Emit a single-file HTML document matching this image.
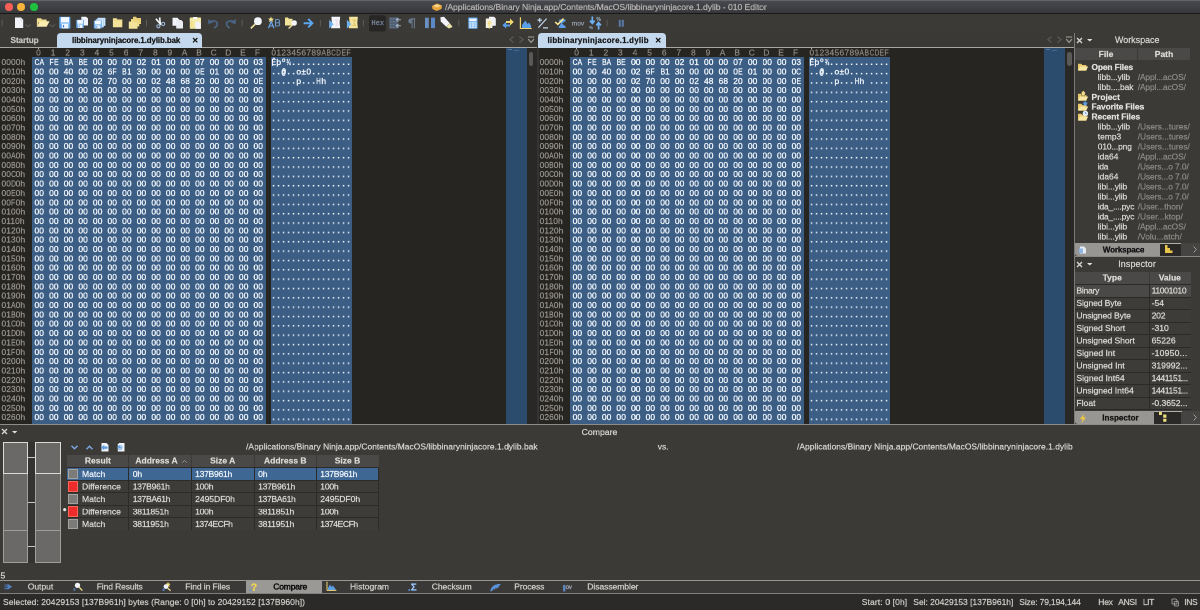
<!DOCTYPE html><html><head><meta charset="utf-8"><title>010 Editor</title><style>
html,body{margin:0;padding:0;}
body{width:1200px;height:610px;overflow:hidden;position:relative;background:#3b3a37;font-family:"Liberation Sans",sans-serif;}
#r{position:absolute;left:0;top:0;width:1200px;height:610px;}
#f0{position:absolute;left:0;top:0;width:2400px;height:1220px;transform:scale(.5);transform-origin:0 0;}
#f{position:absolute;left:0;top:0;width:1200px;height:610px;zoom:2;will-change:transform;}
div{position:absolute;box-sizing:border-box;}
svg{position:absolute;overflow:visible;}
.t{white-space:pre;-webkit-text-stroke:.22px;}
i{font-style:normal;display:inline-block;text-align:center;}

.col{top:58.1px;font-size:8.4px;line-height:9.342px;color:#f2f7fc;white-space:pre;-webkit-text-stroke:.3px;}
.hd{font-size:8.4px;line-height:9.5px;color:#8d8983;white-space:pre;-webkit-text-stroke:.2px;}
.ad{color:#9a9792;-webkit-text-stroke:.2px;letter-spacing:0.08px;}
.l{width:4.672px;}
.l b{display:inline-block;font-weight:normal;transform:scaleX(.8);margin:0 -1px;}
.hx{width:14.6px;text-align:center;letter-spacing:0.1px;}
.as i{width:5px;}
.as b{display:inline-block;font-weight:normal;margin:0 -2px;}
.dt{letter-spacing:2.616px;padding-left:1.308px;}
</style></head><body><div id="r">
<div style="left:0px;top:0px;width:1200px;height:13px;background:linear-gradient(#494a50,#37383c);"></div>
<div style="left:0px;top:0px;width:1200px;height:1px;background:#636469;"></div>
<div style="left:0px;top:13px;width:1200px;height:1px;background:#191919;"></div>
<div style="left:4.699999999999999px;top:3px;width:8px;height:8px;border-radius:4px;background:#f95f57"></div>
<div style="left:17px;top:3px;width:8px;height:8px;border-radius:4px;background:#f8b43a"></div>
<div style="left:30px;top:3px;width:8px;height:8px;border-radius:4px;background:#1fc13f"></div>
<div style="left:0px;top:14px;width:1200px;height:19px;background:#3b3a36;"></div>
<div style="left:0px;top:33px;width:1075px;height:15px;background:#3a3935;"></div>
<div style="left:0px;top:48px;width:536.5px;height:376px;background:#272521;"></div>
<div style="left:32px;top:57px;width:234px;height:367px;background:#3c5e85;"></div>
<div style="left:271px;top:57px;width:80.5px;height:367px;background:#3c5e85;"></div>
<div style="left:506px;top:48px;width:20.8px;height:376px;background:#2b4c6d;"></div>
<div style="left:38px;top:47.8px;width:1.1px;height:1.7px;background:#bdbab6;"></div>
<div style="left:273.2px;top:47.8px;width:1.1px;height:1.7px;background:#bdbab6;"></div>
<div style="left:271.7px;top:58.6px;width:0.9px;height:7px;background:#dfe7f1;"></div>
<div style="left:508px;top:48.6px;width:4px;height:0.9px;background:#4f77a0;"></div>
<div style="left:514px;top:49.6px;width:5px;height:0.9px;background:#41698f;"></div>
<div style="left:527px;top:48px;width:9.5px;height:376px;background:#2a2826;"></div>
<div style="left:528.7px;top:52px;width:4.8px;height:14px;background:#5b5957;border-radius:2.4px"></div>
<svg style="left:271.2px;top:58.1px" width="80" height="364.34" viewBox="0 0 80 364.34"><defs><pattern id="p0" x="0" y="28.026" width="5" height="9.342" patternUnits="userSpaceOnUse"><rect x="1.8" y="5.55" width="1.5" height="1.45" fill="#f4f9ff"/></pattern></defs><g fill="#f4f9ff"><rect x="21.85" y="5.55" width="1.5" height="1.45"/><rect x="26.85" y="5.55" width="1.5" height="1.45"/><rect x="31.85" y="5.55" width="1.5" height="1.45"/><rect x="36.85" y="5.55" width="1.5" height="1.45"/><rect x="41.85" y="5.55" width="1.5" height="1.45"/><rect x="46.85" y="5.55" width="1.5" height="1.45"/><rect x="51.85" y="5.55" width="1.5" height="1.45"/><rect x="56.85" y="5.55" width="1.5" height="1.45"/><rect x="61.85" y="5.55" width="1.5" height="1.45"/><rect x="66.85" y="5.55" width="1.5" height="1.45"/><rect x="71.85" y="5.55" width="1.5" height="1.45"/><rect x="76.85" y="5.55" width="1.5" height="1.45"/><rect x="1.85" y="14.89" width="1.5" height="1.45"/><rect x="6.85" y="14.89" width="1.5" height="1.45"/><rect x="16.85" y="14.89" width="1.5" height="1.45"/><rect x="21.85" y="14.89" width="1.5" height="1.45"/><rect x="41.85" y="14.89" width="1.5" height="1.45"/><rect x="46.85" y="14.89" width="1.5" height="1.45"/><rect x="51.85" y="14.89" width="1.5" height="1.45"/><rect x="56.85" y="14.89" width="1.5" height="1.45"/><rect x="61.85" y="14.89" width="1.5" height="1.45"/><rect x="66.85" y="14.89" width="1.5" height="1.45"/><rect x="71.85" y="14.89" width="1.5" height="1.45"/><rect x="76.85" y="14.89" width="1.5" height="1.45"/><rect x="1.85" y="24.23" width="1.5" height="1.45"/><rect x="6.85" y="24.23" width="1.5" height="1.45"/><rect x="11.85" y="24.23" width="1.5" height="1.45"/><rect x="16.85" y="24.23" width="1.5" height="1.45"/><rect x="21.85" y="24.23" width="1.5" height="1.45"/><rect x="31.85" y="24.23" width="1.5" height="1.45"/><rect x="36.85" y="24.23" width="1.5" height="1.45"/><rect x="41.85" y="24.23" width="1.5" height="1.45"/><rect x="61.85" y="24.23" width="1.5" height="1.45"/><rect x="66.85" y="24.23" width="1.5" height="1.45"/><rect x="71.85" y="24.23" width="1.5" height="1.45"/><rect x="76.85" y="24.23" width="1.5" height="1.45"/><rect x="0" y="28.026" width="80" height="336.312" fill="url(#p0)"/></g></svg>
<div style="left:538.1px;top:48px;width:536.5px;height:376px;background:#272521;"></div>
<div style="left:570.1px;top:57px;width:234px;height:367px;background:#3c5e85;"></div>
<div style="left:809.1px;top:57px;width:80.5px;height:367px;background:#3c5e85;"></div>
<div style="left:1044.1px;top:48px;width:20.8px;height:376px;background:#2b4c6d;"></div>
<div style="left:576.1px;top:47.8px;width:1.1px;height:1.7px;background:#bdbab6;"></div>
<div style="left:811.3px;top:47.8px;width:1.1px;height:1.7px;background:#bdbab6;"></div>
<div style="left:809.8px;top:58.6px;width:0.9px;height:7px;background:#dfe7f1;"></div>
<div style="left:1046.1px;top:48.6px;width:4px;height:0.9px;background:#4f77a0;"></div>
<div style="left:1052.1px;top:49.6px;width:5px;height:0.9px;background:#41698f;"></div>
<div style="left:1065.1px;top:48px;width:9.5px;height:376px;background:#2a2826;"></div>
<div style="left:1066.8000000000002px;top:52px;width:4.8px;height:14px;background:#5b5957;border-radius:2.4px"></div>
<svg style="left:809.3px;top:58.1px" width="80" height="364.34" viewBox="0 0 80 364.34"><defs><pattern id="p538" x="0" y="28.026" width="5" height="9.342" patternUnits="userSpaceOnUse"><rect x="1.8" y="5.55" width="1.5" height="1.45" fill="#f4f9ff"/></pattern></defs><g fill="#f4f9ff"><rect x="21.85" y="5.55" width="1.5" height="1.45"/><rect x="26.85" y="5.55" width="1.5" height="1.45"/><rect x="31.85" y="5.55" width="1.5" height="1.45"/><rect x="36.85" y="5.55" width="1.5" height="1.45"/><rect x="41.85" y="5.55" width="1.5" height="1.45"/><rect x="46.85" y="5.55" width="1.5" height="1.45"/><rect x="51.85" y="5.55" width="1.5" height="1.45"/><rect x="56.85" y="5.55" width="1.5" height="1.45"/><rect x="61.85" y="5.55" width="1.5" height="1.45"/><rect x="66.85" y="5.55" width="1.5" height="1.45"/><rect x="71.85" y="5.55" width="1.5" height="1.45"/><rect x="76.85" y="5.55" width="1.5" height="1.45"/><rect x="1.85" y="14.89" width="1.5" height="1.45"/><rect x="6.85" y="14.89" width="1.5" height="1.45"/><rect x="16.85" y="14.89" width="1.5" height="1.45"/><rect x="21.85" y="14.89" width="1.5" height="1.45"/><rect x="41.85" y="14.89" width="1.5" height="1.45"/><rect x="46.85" y="14.89" width="1.5" height="1.45"/><rect x="51.85" y="14.89" width="1.5" height="1.45"/><rect x="56.85" y="14.89" width="1.5" height="1.45"/><rect x="61.85" y="14.89" width="1.5" height="1.45"/><rect x="66.85" y="14.89" width="1.5" height="1.45"/><rect x="71.85" y="14.89" width="1.5" height="1.45"/><rect x="76.85" y="14.89" width="1.5" height="1.45"/><rect x="1.85" y="24.23" width="1.5" height="1.45"/><rect x="6.85" y="24.23" width="1.5" height="1.45"/><rect x="11.85" y="24.23" width="1.5" height="1.45"/><rect x="16.85" y="24.23" width="1.5" height="1.45"/><rect x="21.85" y="24.23" width="1.5" height="1.45"/><rect x="31.85" y="24.23" width="1.5" height="1.45"/><rect x="36.85" y="24.23" width="1.5" height="1.45"/><rect x="41.85" y="24.23" width="1.5" height="1.45"/><rect x="61.85" y="24.23" width="1.5" height="1.45"/><rect x="66.85" y="24.23" width="1.5" height="1.45"/><rect x="71.85" y="24.23" width="1.5" height="1.45"/><rect x="76.85" y="24.23" width="1.5" height="1.45"/><rect x="0" y="28.026" width="80" height="336.312" fill="url(#p538)"/></g></svg>
<div style="left:536.5px;top:48px;width:2px;height:376px;background:#353432;"></div>
<div style="left:0px;top:47px;width:57px;height:1px;background:#a9a6a2;"></div>
<div style="left:202px;top:47px;width:334.5px;height:1px;background:#a9a6a2;"></div>
<div style="left:666px;top:47px;width:408px;height:1px;background:#a9a6a2;"></div>
<div style="left:57px;top:33px;width:145px;height:15px;background:#c4d9ee;border-radius:4px 4px 0 0"></div>
<div style="left:538px;top:33px;width:128px;height:15px;background:#c4d9ee;border-radius:4px 4px 0 0"></div>
<svg style="left:0;top:0" width="650" height="34" viewBox="0 0 650 34"><rect x="1.6" y="19.7" width="1" height="6.6" fill="#5f5d5a"/><rect x="146.0" y="19.7" width="1" height="6.6" fill="#5f5d5a"/><rect x="241.6" y="19.7" width="1" height="6.6" fill="#5f5d5a"/><rect x="319.9" y="19.7" width="1" height="6.6" fill="#5f5d5a"/><rect x="362.8" y="19.7" width="1" height="6.6" fill="#5f5d5a"/><rect x="458.3" y="19.7" width="1" height="6.6" fill="#5f5d5a"/><rect x="606.6" y="19.7" width="1" height="6.6" fill="#5f5d5a"/><path d="M15 17.6H21.0L23.2 19.8V28.0H15Z" fill="#f1f3f8"/><path d="M20.8 17.6V19.9H23.2" fill="none" stroke="#c9ccd4" stroke-width="0.6"/><path d="M25.4 24.6L28.099999999999998 26.6L30.799999999999997 24.6" fill="none" stroke="#73716d" stroke-width="0.9"/><path d="M37 18.3H41L42 19.5H46.6V22H37Z" fill="#f0dc8c"/><path d="M37 26.8V21.5H39L37 26.8Z" fill="#f0dc8c"/><path d="M37 26.8L39.6 21.2H49.6L46.6 26.8Z" fill="#f8ecb0"/><path d="M37.3 19V26.8" fill="none" stroke="#f0dc8c" stroke-width="0.7"/><path d="M49.8 24.6L52.5 26.6L55.199999999999996 24.6" fill="none" stroke="#73716d" stroke-width="0.9"/><rect x="59.3" y="16.8" width="11.1" height="11.6" fill="#5fa6ee" rx="0.6"/><rect x="60.854" y="17.148" width="8.214" height="5.336" fill="#f6f9fd"/><rect x="60.41" y="22.484" width="8.88" height="1.392" fill="#a4cdf6"/><rect x="61.742" y="23.876" width="6.659999999999999" height="4.524" fill="#eef4fb"/><rect x="62.852" y="24.92" width="1.2209999999999999" height="2.552" fill="#3f7fd0"/><path d="M81.3 16.8H86.2L88.0 18.6V25.6H81.3Z" fill="#f1f3f8"/><rect x="76.3" y="19.8" width="7.5" height="8.2" fill="#5fa6ee" rx="0.6"/><rect x="77.35" y="20.046" width="5.55" height="3.772" fill="#f6f9fd"/><rect x="77.05" y="23.818" width="6.0" height="0.9839999999999999" fill="#a4cdf6"/><rect x="77.95" y="24.802" width="4.5" height="3.198" fill="#eef4fb"/><rect x="78.7" y="25.54" width="0.825" height="1.8039999999999998" fill="#3f7fd0"/><rect x="97.4" y="17.7" width="8.1" height="8.2" fill="#9fc6f2" rx="0.5"/><rect x="97.9" y="18.2" width="7" height="7" fill="#d9e8fa"/><rect x="95.7" y="19.2" width="8.1" height="8.2" fill="#9fc6f2" rx="0.5"/><rect x="96.2" y="19.7" width="7" height="7" fill="#e3eefb"/><rect x="93.8" y="20.6" width="8" height="7.8" fill="#5fa6ee" rx="0.6"/><rect x="94.92" y="20.834000000000003" width="5.92" height="3.588" fill="#f6f9fd"/><rect x="94.6" y="24.422" width="6.4" height="0.9359999999999999" fill="#a4cdf6"/><rect x="95.56" y="25.358" width="4.8" height="3.042" fill="#eef4fb"/><rect x="96.36" y="26.060000000000002" width="0.88" height="1.716" fill="#3f7fd0"/><path d="M112.9 18.2H116.6L117.5 19.4H122.3V27.3H112.9Z" fill="#f3e29a"/><path d="M112.9 20.3H122.3" fill="none" stroke="#e8cf74" stroke-width="0.5"/><path d="M133 16.8H136L137 18H141V24H133Z" fill="#e8cf74"/><path d="M131 19H134L135 20.2H139.3V26.4H131Z" fill="#efd985"/><path d="M128.8 21.4H132.2L133.2 22.6H137.5V28.8H128.8Z" fill="#f3e29a"/><path d="M155.9 18.7L161 24.6" fill="none" stroke="#f2f5fa" stroke-width="1.7"/><path d="M159.7 17.5L160.3 24.8" fill="none" stroke="#f2f5fa" stroke-width="1.6"/><circle cx="158.4" cy="26.3" r="1.6" fill="none" stroke="#a5bde0" stroke-width="1.1"/><circle cx="163.1" cy="23.9" r="1.6" fill="none" stroke="#a5bde0" stroke-width="1.1"/><path d="M172.5 17.8H177.5L179.1 19.400000000000002V25.8H172.5Z" fill="#f1f3f8"/><path d="M176.2 20H181.2L183.0 21.8V28.4H176.2Z" fill="#e9ecf3"/><rect x="189.8" y="17.6" width="11.2" height="11.1" fill="#f4e8a2" rx="0.6"/><rect x="193" y="17" width="4.4" height="1.9" fill="#f6f7fa" rx="0.5"/><path d="M191 18H192.6V28.7H191Z" fill="#efdf85"/><rect x="189.8" y="19.6" width="11.2" height="0.9" fill="#faf3c8"/><path d="M195.3 21.8H199.3L200.8 23.3V28.700000000000003H195.3Z" fill="#f1f3f8"/><path d="M209.3 22.2C213 19.6 217.6 21 217.3 24.4C217.1 26.2 215.6 27.3 214.2 28" fill="none" stroke="#4b6685" stroke-width="1.7"/><path d="M207.9 19L208.4 24.3L213.3 22.6Z" fill="#4b6685"/><path d="M234.6 22.2C230.9 19.6 226.3 21 226.6 24.4C226.8 26.2 228.3 27.3 229.7 28" fill="none" stroke="#4b6685" stroke-width="1.7"/><path d="M236 19L235.5 24.3L230.6 22.6Z" fill="#4b6685"/><path d="M255.2 24.2L250.8 28.4" fill="none" stroke="#f1e2a0" stroke-width="1.6"/><circle cx="257.9" cy="21.2" r="3.9" fill="#f3f6fa"/><path d="M271 16.6L271.9 18.5L274 18.8L272.4 20.2L272.9 22.2L271 21.2L269.1 22.2L269.6 20.2L268 18.8L270.1 18.5Z" fill="#f2e08c"/><path d="M268.4 28.2L271.2 21.6L274 28.2M269.4 26H273" fill="none" stroke="#6aa6ea" stroke-width="1.2"/><path d="M275.5 19.5V26H278C280.3 26 280.3 22.8 278 22.8H275.5M278 22.8C280 22.8 280 19.5 277.8 19.5H275.5" fill="none" stroke="#6d97c8" stroke-width="1.1"/><path d="M285 17.6H288L288.9 18.8H292.5V25.5H285Z" fill="#f3e29a"/><path d="M292.6 24.8L288.6 28.6" fill="none" stroke="#f1e2a0" stroke-width="1.4"/><circle cx="294.2" cy="23" r="2.7" fill="#f3f6fa"/><path d="M303.6 23.2H311.5M308.2 19L312.4 23.2L308.2 27.4" fill="none" stroke="#5ba6ee" stroke-width="1.9"/><path d="M331.4 16.8H340.2L339.59999999999997 22.4L340.2 28.2H331.0L331.8 22.4Z" fill="#f3f5fa"/><path d="M334.8 20H337.8L336.2 22.6L337.8 25.4H334.8" fill="none" stroke="#f0c8d8" stroke-width="0.7"/><path d="M329.2 19.8L333.59999999999997 24.3L329.2 28.6Z" fill="#6fb0f0"/><path d="M349.09999999999997 16.8H357.9L357.29999999999995 22.4L357.9 28.2H348.7L349.5 22.4Z" fill="#f5e59c"/><path d="M352.5 20H355.5L353.9 22.6L355.5 25.4H352.5" fill="none" stroke="#d4b04a" stroke-width="0.7"/><path d="M346.9 19.8L351.29999999999995 24.3L346.9 28.6Z" fill="#6fb0f0"/><rect x="369" y="15.3" width="16.7" height="16.2" fill="#272624" rx="2"/><rect x="389.2" y="17.2" width="8.6" height="11.4" fill="#4f5d6e" rx="0.4"/><rect x="389.8" y="18" width="1.8" height="1.6" fill="#64748a"/><rect x="392.6" y="18" width="1.8" height="1.6" fill="#64748a"/><rect x="395.4" y="18" width="1.8" height="1.6" fill="#64748a"/><rect x="389.8" y="20.9" width="1.8" height="1.6" fill="#64748a"/><rect x="392.6" y="20.9" width="1.8" height="1.6" fill="#64748a"/><rect x="395.4" y="20.9" width="1.8" height="1.6" fill="#64748a"/><rect x="389.8" y="23.8" width="1.8" height="1.6" fill="#64748a"/><rect x="392.6" y="23.8" width="1.8" height="1.6" fill="#64748a"/><rect x="395.4" y="23.8" width="1.8" height="1.6" fill="#64748a"/><rect x="389.8" y="26.7" width="1.8" height="1.6" fill="#64748a"/><rect x="392.6" y="26.7" width="1.8" height="1.6" fill="#64748a"/><rect x="395.4" y="26.7" width="1.8" height="1.6" fill="#64748a"/><path d="M400.8 19.8H396.6M398.4 18L396.4 19.8L398.4 21.6M400.8 25.8H396.6M398.4 24L396.4 25.8L398.4 27.6" fill="none" stroke="#a3b3c8" stroke-width="1.1"/><path d="M412.1 18.6V28.4M414.4 18.6V28.4M415.4 18.9H410.8" fill="none" stroke="#6c7c90" stroke-width="1"/><path d="M411.6 18.4C407.2 18.4 407.2 23.6 411.6 23.6Z" fill="#6c7c90"/><rect x="425" y="17.7" width="3.8" height="10.4" fill="#6a90c2"/><rect x="431" y="17.7" width="4" height="10.4" fill="#5c89c6"/><path d="M440.4 17.2L444 16.8L450 23.6L446 26.6L440.8 21.4Z" fill="#f3f4f9"/><path d="M446 26.6L450 23.6L452.6 27L448.8 28.4Z" fill="#efe6ac"/><rect x="468.3" y="17.6" width="9.2" height="11.2" fill="#6aacf0" rx="0.7"/><rect x="469.3" y="18.6" width="7.2" height="2.6" fill="#f0f6fc"/><rect x="469.3" y="22.2" width="7.2" height="1.5" fill="#dcebf9"/><rect x="469.3" y="24.3" width="7.2" height="1.5" fill="#dcebf9"/><rect x="469.3" y="26.4" width="7.2" height="1.5" fill="#dcebf9"/><rect x="471.5" y="22.2" width="0.5" height="5.7" fill="#6aacf0"/><rect x="474" y="22.2" width="0.5" height="5.7" fill="#6aacf0"/><path d="M489 16.8H494.0L495.8 18.6V25.8H489Z" fill="#f1f3f8"/><path d="M485.8 18.6H490.8L492.40000000000003 20.200000000000003V28.0H485.8Z" fill="#f4f1e4"/><circle cx="489.4" cy="23" r="2" fill="#f2e08c"/><path d="M489.4 25V28.6" fill="none" stroke="#f2e08c" stroke-width="1.3"/><path d="M506 21H510V18.4L513.8 22L510 25.6V23H506Z" fill="#f0d670"/><path d="M510 24.4H506.2V21.8L502.3 25.2L506.2 28.6V26.4H510Z" fill="#5b9ee8"/><path d="M522 28V25L525.4 20.4L527.6 24L529 22.4L531 25.6V28Z" fill="#5b9ee8"/><path d="M520.4 17.2V28.5H531.8" fill="none" stroke="#f0d670" stroke-width="1.2"/><path d="M537.4 20.2H542M539.7 17.9V22.5M543 27.8H548M538.4 27.6L546.6 18.6" fill="none" stroke="#c3d6ef" stroke-width="1.2"/><path d="M559.2 19.6H565.6V21L562 23.6L565.6 26.4V28H558.8V26.6L561 23.8L559.2 21Z" fill="#5b9ee8"/><path d="M555.2 22L557.8 24.4L563.6 18.6" fill="none" stroke="#f3e79a" stroke-width="1.6"/><path d="M592.3 16.6V23M590 20.6L592.3 23.4L594.6 20.6" fill="none" stroke="#6eb0f2" stroke-width="1.7"/><path d="M598.6 29.4V23M596.3 25.4L598.6 22.6L600.9 25.4" fill="none" stroke="#6eb0f2" stroke-width="1.7"/><rect x="618.8" y="19.8" width="2" height="7" fill="#587aa6"/><rect x="621.8" y="19.8" width="2" height="7" fill="#587aa6"/></svg>
<svg style="left:192.8px;top:38.4px" width="4.4" height="4.4" viewBox="0 0 4.4 4.4"><path d="M0 0L4.4 4.4M4.4 0L0 4.4" stroke="#111" stroke-width="1.2" fill="none"/></svg>
<svg style="left:656.3px;top:38.4px" width="4.4" height="4.4" viewBox="0 0 4.4 4.4"><path d="M0 0L4.4 4.4M4.4 0L0 4.4" stroke="#111" stroke-width="1.2" fill="none"/></svg>
<svg style="left:508.5px;top:36px" width="26" height="9" viewBox="0 0 26 9"><path d="M4.6 .6L.9 3.6L4.6 6.6M10.4 .6L14.1 3.6L10.4 6.6" stroke="#5f5d5a" stroke-width="1.2" fill="none"/><path d="M19 1H25.2M19.2 3.2L22.1 6.4L25 3.2" stroke="#a5a29e" stroke-width="1.1" fill="none"/></svg>
<svg style="left:1047.2px;top:36px" width="26" height="9" viewBox="0 0 26 9"><path d="M4.6 .6L.9 3.6L4.6 6.6M10.4 .6L14.1 3.6L10.4 6.6" stroke="#5f5d5a" stroke-width="1.2" fill="none"/><path d="M19 1H25.2M19.2 3.2L22.1 6.4L25 3.2" stroke="#a5a29e" stroke-width="1.1" fill="none"/></svg>
<svg style="left:432px;top:2.5px" width="10" height="8" viewBox="0 0 10 8"><path d="M0 3L5 .5L10 2.5L9.5 6L4.5 8L.5 6Z" fill="#e9a43c"/><path d="M1 2.8L5 1.2L9 2.7L5 4.5Z" fill="#f6d88c"/></svg>
<div style="left:1075px;top:33px;width:125px;height:391px;background:#3b3a37;"></div>
<div style="left:1074px;top:33px;width:1px;height:391px;background:#7c7a77;"></div>
<svg style="left:1076.9px;top:37.7px" width="5.0" height="5.0" viewBox="0 0 5.0 5.0"><path d="M0 0L5.0 5.0M5.0 0L0 5.0" stroke="#dad8d4" stroke-width="1.3" fill="none"/></svg>
<svg style="left:1087.3px;top:39.2px" width="5.4" height="3" viewBox="0 0 5.4 3"><path d="M0 0H5.4L2.7 2.6Z" fill="#e4e2de"/></svg>
<div style="left:1075px;top:48.3px;width:115px;height:12px;background:#4a4947;"></div>
<div style="left:1137px;top:48.3px;width:1px;height:12px;background:#3b3a38;"></div>
<svg style="left:1077.8px;top:67.1px" width="11" height="1" viewBox="0 0 11 1"><path d="M0 -3.2H3.4L4.3 -2.1H8.4V3.6H0Z" fill="#e6c76a"/><path d="M0 3.6L2 -.6H10.2L8.2 3.6Z" fill="#f7e7a2"/></svg>
<svg style="left:1077.8px;top:97.05499999999999px" width="11" height="1" viewBox="0 0 11 1"><path d="M0 -3.2H3.4L4.3 -2.1H8.4V3.6H0Z" fill="#e6c76a"/><path d="M0 3.6L2 -.6H10.2L8.2 3.6Z" fill="#f7e7a2"/><path d="M3.6 -1.2V-3.6H2.6L5.3 -6.6L8 -3.6H7V-1.2Z" fill="#f5de86" stroke="#3b3a37" stroke-width=".4"/></svg>
<svg style="left:1077.8px;top:107.03999999999999px" width="11" height="1" viewBox="0 0 11 1"><path d="M0 -3.2H3.4L4.3 -2.1H8.4V3.6H0Z" fill="#e6c76a"/><path d="M0 3.6L2 -.6H10.2L8.2 3.6Z" fill="#f7e7a2"/><path d="M7.2 -6.4L8.1 -4.6L10 -4.3L8.6 -3L9 -1.1L7.2 -2.1L5.4 -1.1L5.8 -3L4.4 -4.3L6.3 -4.6Z" fill="#5a9fe8"/></svg>
<svg style="left:1077.8px;top:117.02499999999999px" width="11" height="1" viewBox="0 0 11 1"><path d="M0 -3.2H3.4L4.3 -2.1H8.4V3.6H0Z" fill="#e6c76a"/><path d="M0 3.6L2 -.6H10.2L8.2 3.6Z" fill="#f7e7a2"/><circle cx="7.4" cy="-3.6" r="2.7" fill="#e4ecf8"/><path d="M7.4 -5V-3.5H8.6" stroke="#5a8fd0" stroke-width=".7" fill="none"/></svg>
<div style="left:1075px;top:243.2px;width:125px;height:12.6px;background:#464442;"></div>
<div style="left:1075px;top:243.2px;width:84.5px;height:12.6px;background:#989693;border-radius:0 0 0 3px"></div>
<svg style="left:1079px;top:245px" width="8" height="9" viewBox="0 0 8 9"><path d="M1 1.5H5L7 3.5V8.5H1Z" fill="#e6edf6"/><path d="M0 3.5H4V8H0Z" fill="#8fb6e6"/></svg>
<div style="left:1159.5px;top:243.2px;width:21px;height:12.6px;background:#2a2928;"></div>
<div style="left:1159.5px;top:243px;width:21.5px;height:0.9px;background:#b0aeaa;"></div>
<svg style="left:1164.2px;top:245px" width="9" height="8" viewBox="0 0 9 8"><path d="M1 0H3.5V3H6V5.5H8.5V8H1Z" fill="#e8c54a"/></svg>
<svg style="left:1192.5px;top:246px" width="4" height="7" viewBox="0 0 4 7"><path d="M.5 .5L3.5 3.5L.5 6.5" stroke="#a09d99" stroke-width="1" fill="none"/></svg>
<div style="left:1075px;top:256px;width:125px;height:1px;background:#8a8885;"></div>
<svg style="left:1076.9px;top:261.7px" width="5.0" height="5.0" viewBox="0 0 5.0 5.0"><path d="M0 0L5.0 5.0M5.0 0L0 5.0" stroke="#dad8d4" stroke-width="1.3" fill="none"/></svg>
<svg style="left:1087.3px;top:263.2px" width="5.4" height="3" viewBox="0 0 5.4 3"><path d="M0 0H5.4L2.7 2.6Z" fill="#e4e2de"/></svg>
<div style="left:1075px;top:272px;width:115.5px;height:12.2px;background:#4a4947;"></div>
<div style="left:1149.2px;top:272px;width:1px;height:12.2px;background:#3b3a38;"></div>
<div style="left:1075px;top:284.2px;width:115.5px;height:125.4px;background:#3d3c39;"></div>
<div style="left:1149.1px;top:284.2px;width:1.2px;height:125.4px;background:#2b2a28;"></div>
<div style="left:1075px;top:284.2px;width:115.5px;height:12.5px;background:#4a4947;"></div>
<div style="left:1149.1px;top:284.2px;width:1.2px;height:12.5px;background:#2b2a28;"></div>
<div style="left:1075px;top:284.0px;width:115.5px;height:1.15px;background:#2b2a28;"></div>
<div style="left:1075px;top:296.53px;width:115.5px;height:1.15px;background:#2b2a28;"></div>
<div style="left:1075px;top:309.06px;width:115.5px;height:1.15px;background:#2b2a28;"></div>
<div style="left:1075px;top:321.59px;width:115.5px;height:1.15px;background:#2b2a28;"></div>
<div style="left:1075px;top:334.12px;width:115.5px;height:1.15px;background:#2b2a28;"></div>
<div style="left:1075px;top:346.65px;width:115.5px;height:1.15px;background:#2b2a28;"></div>
<div style="left:1075px;top:359.18px;width:115.5px;height:1.15px;background:#2b2a28;"></div>
<div style="left:1075px;top:371.71px;width:115.5px;height:1.15px;background:#2b2a28;"></div>
<div style="left:1075px;top:384.24px;width:115.5px;height:1.15px;background:#2b2a28;"></div>
<div style="left:1075px;top:396.77px;width:115.5px;height:1.15px;background:#2b2a28;"></div>
<div style="left:1075px;top:409.3px;width:115.5px;height:1.1px;background:#2b2a28;"></div>
<div style="left:1075px;top:411.2px;width:125px;height:12.8px;background:#464442;"></div>
<div style="left:1075px;top:411.2px;width:79px;height:12.8px;background:#989693;border-radius:0 0 0 3px"></div>
<svg style="left:1080px;top:413.5px" width="6" height="9" viewBox="0 0 6 9"><path d="M4 0L0 5H2.5L1.5 9L6 3.5H3.3Z" fill="#f0c83c"/></svg>
<div style="left:1154px;top:411.2px;width:27px;height:12.8px;background:#2a2928;"></div>
<div style="left:1154px;top:411px;width:27.5px;height:0.9px;background:#b0aeaa;"></div>
<svg style="left:1158.8px;top:412.2px" width="8" height="10" viewBox="0 0 8 10"><path d="M0 0H2.9V2.9H0ZM4.2 2.5H7.4V5.7H4.2ZM4.2 6.7H7.4V9.8H4.2Z" fill="#eedd7e"/></svg>
<svg style="left:1192.5px;top:414px" width="4" height="7" viewBox="0 0 4 7"><path d="M.5 .5L3.5 3.5L.5 6.5" stroke="#a09d99" stroke-width="1" fill="none"/></svg>
<div style="left:0px;top:424px;width:1200px;height:1px;background:#8f8c88;"></div>
<div style="left:0px;top:425px;width:1200px;height:156px;background:#3b3a37;"></div>
<svg style="left:1.9000000000000004px;top:429.1px" width="5.0" height="5.0" viewBox="0 0 5.0 5.0"><path d="M0 0L5.0 5.0M5.0 0L0 5.0" stroke="#dad8d4" stroke-width="1.3" fill="none"/></svg>
<svg style="left:12px;top:430.6px" width="5.4" height="3" viewBox="0 0 5.4 3"><path d="M0 0H5.4L2.7 2.6Z" fill="#e4e2de"/></svg>
<div style="left:2.6px;top:442.2px;width:25.5px;height:120.4px;background:#6a6967;border:1px solid #a19f9b"></div>
<div style="left:2.6px;top:472.8px;width:25.5px;height:1px;background:#a19f9b;"></div>
<div style="left:2.6px;top:530.3px;width:25.5px;height:1px;background:#a19f9b;"></div>
<div style="left:2.6px;top:442.2px;width:25.5px;height:31.6px;background:none;border:1px solid #dcdad6"></div>
<div style="left:35.1px;top:442.2px;width:26.3px;height:120.4px;background:#6a6967;border:1px solid #a19f9b"></div>
<div style="left:35.1px;top:472.8px;width:26.3px;height:1px;background:#a19f9b;"></div>
<div style="left:35.1px;top:530.3px;width:26.3px;height:1px;background:#a19f9b;"></div>
<div style="left:35.1px;top:442.2px;width:26.3px;height:31.6px;background:none;border:1px solid #dcdad6"></div>
<div style="left:28.1px;top:442.2px;width:7px;height:120.4px;background:#343331;"></div>
<div style="left:28.1px;top:457.4px;width:7px;height:1px;background:#c8c6c2;"></div>
<div style="left:28.1px;top:501.8px;width:7px;height:1px;background:#c8c6c2;"></div>
<div style="left:28.1px;top:545.7px;width:7px;height:1px;background:#c8c6c2;"></div>
<svg style="left:71px;top:444.5px" width="7" height="5" viewBox="0 0 7 5"><path d="M.5 .8L3.5 3.8L6.5 .8" stroke="#7aa6dc" stroke-width="1.5" fill="none"/></svg>
<svg style="left:85.5px;top:444.5px" width="7" height="5" viewBox="0 0 7 5"><path d="M.5 4.2L3.5 1.2L6.5 4.2" stroke="#7aa6dc" stroke-width="1.5" fill="none"/></svg>
<svg style="left:100.5px;top:442.5px" width="8" height="9" viewBox="0 0 8 9"><path d="M.5 0H5.5L7.5 2V8.5H.5Z" fill="#eef3fa"/><path d="M0 4.6L3.2 2V3.6H6.6V5.8H3.2V7.2Z" fill="#5b9be0"/></svg>
<svg style="left:116.5px;top:442.5px" width="8" height="9" viewBox="0 0 8 9"><path d="M2 0H7.5V8.5H.8V1.5Z" fill="#eef3fa"/><circle cx="3" cy="4.6" r="2.4" fill="#5b9be0"/><path d="M1.6 4.6A1.4 1.4 0 1 0 3 3.2" stroke="#eef3fa" stroke-width=".7" fill="none"/></svg>
<div style="left:67px;top:455.4px;width:311.6px;height:12px;background:#4a4947;"></div>
<div style="left:128.3px;top:455.4px;width:1px;height:12px;background:#3b3a38;"></div>
<div style="left:190.7px;top:455.4px;width:1px;height:12px;background:#3b3a38;"></div>
<div style="left:253.7px;top:455.4px;width:1px;height:12px;background:#3b3a38;"></div>
<div style="left:315.9px;top:455.4px;width:1px;height:12px;background:#3b3a38;"></div>
<svg style="left:182px;top:460px" width="5" height="3" viewBox="0 0 5 3"><path d="M.3 2.7L2.5 .5L4.7 2.7" stroke="#a9a6a2" stroke-width=".8" fill="none"/></svg>
<div style="left:67px;top:467.4px;width:311.6px;height:62.8px;background:#2c2b29;"></div>
<div style="left:67px;top:468.0px;width:61.30000000000001px;height:11.7px;background:#3e6794;"></div>
<div style="left:129.3px;top:468.0px;width:61.39999999999998px;height:11.7px;background:#3e6794;"></div>
<div style="left:191.7px;top:468.0px;width:62.0px;height:11.7px;background:#3e6794;"></div>
<div style="left:254.7px;top:468.0px;width:61.19999999999999px;height:11.7px;background:#3e6794;"></div>
<div style="left:316.9px;top:468.0px;width:61.200000000000045px;height:11.7px;background:#3e6794;"></div>
<div style="left:68.2px;top:468.70000000000005px;width:10px;height:10.5px;background:#7b7b7a;border:1px solid #a3a2a0"></div>
<div style="left:67px;top:480.5px;width:61.30000000000001px;height:11.7px;background:#3d3c39;"></div>
<div style="left:129.3px;top:480.5px;width:61.39999999999998px;height:11.7px;background:#3d3c39;"></div>
<div style="left:191.7px;top:480.5px;width:62.0px;height:11.7px;background:#3d3c39;"></div>
<div style="left:254.7px;top:480.5px;width:61.19999999999999px;height:11.7px;background:#3d3c39;"></div>
<div style="left:316.9px;top:480.5px;width:61.200000000000045px;height:11.7px;background:#3d3c39;"></div>
<div style="left:68.2px;top:481.20000000000005px;width:10px;height:10.5px;background:#ef2c2c;border:1px solid #f36a5a"></div>
<div style="left:67px;top:493.0px;width:61.30000000000001px;height:11.7px;background:#3d3c39;"></div>
<div style="left:129.3px;top:493.0px;width:61.39999999999998px;height:11.7px;background:#3d3c39;"></div>
<div style="left:191.7px;top:493.0px;width:62.0px;height:11.7px;background:#3d3c39;"></div>
<div style="left:254.7px;top:493.0px;width:61.19999999999999px;height:11.7px;background:#3d3c39;"></div>
<div style="left:316.9px;top:493.0px;width:61.200000000000045px;height:11.7px;background:#3d3c39;"></div>
<div style="left:68.2px;top:493.70000000000005px;width:10px;height:10.5px;background:#7b7b7a;border:1px solid #a3a2a0"></div>
<div style="left:67px;top:505.5px;width:61.30000000000001px;height:11.7px;background:#3d3c39;"></div>
<div style="left:129.3px;top:505.5px;width:61.39999999999998px;height:11.7px;background:#3d3c39;"></div>
<div style="left:191.7px;top:505.5px;width:62.0px;height:11.7px;background:#3d3c39;"></div>
<div style="left:254.7px;top:505.5px;width:61.19999999999999px;height:11.7px;background:#3d3c39;"></div>
<div style="left:316.9px;top:505.5px;width:61.200000000000045px;height:11.7px;background:#3d3c39;"></div>
<div style="left:68.2px;top:506.20000000000005px;width:10px;height:10.5px;background:#ef2c2c;border:1px solid #f36a5a"></div>
<div style="left:67px;top:518.0px;width:61.30000000000001px;height:11.7px;background:#3d3c39;"></div>
<div style="left:129.3px;top:518.0px;width:61.39999999999998px;height:11.7px;background:#3d3c39;"></div>
<div style="left:191.7px;top:518.0px;width:62.0px;height:11.7px;background:#3d3c39;"></div>
<div style="left:254.7px;top:518.0px;width:61.19999999999999px;height:11.7px;background:#3d3c39;"></div>
<div style="left:316.9px;top:518.0px;width:61.200000000000045px;height:11.7px;background:#3d3c39;"></div>
<div style="left:68.2px;top:518.7px;width:10px;height:10.5px;background:#7b7b7a;border:1px solid #a3a2a0"></div>
<svg style="left:62.7px;top:508.1px" width="3.4" height="3.4" viewBox="0 0 3.4 3.4"><circle cx="1.7" cy="1.7" r="1.6" fill="#e6e4e0"/></svg>
<div style="left:0px;top:580px;width:1200px;height:1px;background:#9a9793;"></div>
<div style="left:0px;top:581px;width:1200px;height:12.2px;background:#3a3937;"></div>
<div style="left:0px;top:593.1px;width:1200px;height:0.9px;background:#807d7a;"></div>
<div style="left:246px;top:581px;width:76.4px;height:12.1px;background:#9b9996;"></div>
<div style="left:0px;top:594.2px;width:1200px;height:15.8px;background:#2b2a29;"></div>
<svg style="left:0;top:0" width="1200" height="610" viewBox="0 0 1200 610"><path d="M4.4 585H9M4.4 586.8H8M4.4 588.6H9" fill="none" stroke="#4a74ae" stroke-width="1.1"/><path d="M7.6 584L12.4 586.8L7.6 589.6Z" fill="#5482c2"/><path d="M79.2 587.2L82.4 590.6" fill="none" stroke="#f0dc8a" stroke-width="1.3"/><circle cx="77.5" cy="585.3" r="2.6" fill="#f1f4f9"/><path d="M73.4 588H75.4V591H73.4Z" fill="#4f7096"/><path d="M168 582L168.8 583.6L170.6 583.9L169.3 585.1L169.6 586.9L168 586L166.4 586.9L166.7 585.1L165.4 583.9L167.2 583.6Z" fill="#f0dc6a"/><path d="M167.6 588L170.6 590.8" fill="none" stroke="#f0dc8a" stroke-width="1.2"/><circle cx="166" cy="586.6" r="2.4" fill="#eef2f8"/><path d="M162.6 588.4H164.6V591H162.6Z" fill="#4f7bb6"/><path d="M249.6 589.4H251.2V591H249.6Z" fill="#6a8fc0"/><path d="M328 590V588L330 584.4L331.6 587L332.8 585.6L335.6 589V590Z" fill="#5b9ee8"/><path d="M327 581.6V590.4H336.4" fill="none" stroke="#f0d670" stroke-width="1"/><path d="M408.4 589H410V591H408.4Z" fill="#4f86cc"/><path d="M490.2 591.4C491 586 495 583.6 501 584C499 585.6 498.6 587 498.2 588.2L496.8 587.4L496.4 589L495 588.2L494.6 589.8L493.2 589L492.6 590.8Z" fill="#5a90d4"/><path d="M563 585H565.4V591.4H563Z" fill="#5a85c0"/><path d="M1172 599H1176L1177 600V604H1172ZM1174.4 601.4H1178.4V606H1174.4Z" fill="none" stroke="#aeaca8" stroke-width="0.8"/></svg>
</div>
<div id="f0"><div id="f">
<div class="hd" style="left:31.20px;top:48px;width:14.6px;text-align:center">0</div>
<div class="hd" style="left:45.80px;top:48px;width:14.6px;text-align:center">1</div>
<div class="hd" style="left:60.40px;top:48px;width:14.6px;text-align:center">2</div>
<div class="hd" style="left:75.00px;top:48px;width:14.6px;text-align:center">3</div>
<div class="hd" style="left:89.60px;top:48px;width:14.6px;text-align:center">4</div>
<div class="hd" style="left:104.20px;top:48px;width:14.6px;text-align:center">5</div>
<div class="hd" style="left:118.80px;top:48px;width:14.6px;text-align:center">6</div>
<div class="hd" style="left:133.40px;top:48px;width:14.6px;text-align:center">7</div>
<div class="hd" style="left:148.00px;top:48px;width:14.6px;text-align:center">8</div>
<div class="hd" style="left:162.60px;top:48px;width:14.6px;text-align:center">9</div>
<div class="hd" style="left:177.20px;top:48px;width:14.6px;text-align:center">A</div>
<div class="hd" style="left:191.80px;top:48px;width:14.6px;text-align:center">B</div>
<div class="hd" style="left:206.40px;top:48px;width:14.6px;text-align:center">C</div>
<div class="hd" style="left:221.00px;top:48px;width:14.6px;text-align:center">D</div>
<div class="hd" style="left:235.60px;top:48px;width:14.6px;text-align:center">E</div>
<div class="hd" style="left:250.20px;top:48px;width:14.6px;text-align:center">F</div>
<div class="col ad" style="left:1.5px;">0000h
0010h
0020h
0030h
0040h
0050h
0060h
0070h
0080h
0090h
00<i class="l"><b>A</b></i>0h
00<i class="l"><b>B</b></i>0h
00<i class="l"><b>C</b></i>0h
00<i class="l"><b>D</b></i>0h
00<i class="l"><b>E</b></i>0h
00<i class="l"><b>F</b></i>0h
0100h
0110h
0120h
0130h
0140h
0150h
0160h
0170h
0180h
0190h
01<i class="l"><b>A</b></i>0h
01<i class="l"><b>B</b></i>0h
01<i class="l"><b>C</b></i>0h
01<i class="l"><b>D</b></i>0h
01<i class="l"><b>E</b></i>0h
01<i class="l"><b>F</b></i>0h
0200h
0210h
0220h
0230h
0240h
0250h
0260h</div>
<div class="col hx" style="left:32.00px;"><i class="l"><b>C</b></i><i class="l"><b>A</b></i>
00
00
00
00
00
00
00
00
00
00
00
00
00
00
00
00
00
00
00
00
00
00
00
00
00
00
00
00
00
00
00
00
00
00
00
00
00
00</div>
<div class="col hx" style="left:46.60px;"><i class="l"><b>F</b></i><i class="l"><b>E</b></i>
00
00
00
00
00
00
00
00
00
00
00
00
00
00
00
00
00
00
00
00
00
00
00
00
00
00
00
00
00
00
00
00
00
00
00
00
00
00</div>
<div class="col hx" style="left:61.20px;"><i class="l"><b>B</b></i><i class="l"><b>A</b></i>
40
00
00
00
00
00
00
00
00
00
00
00
00
00
00
00
00
00
00
00
00
00
00
00
00
00
00
00
00
00
00
00
00
00
00
00
00
00</div>
<div class="col hx" style="left:75.80px;"><i class="l"><b>B</b></i><i class="l"><b>E</b></i>
00
00
00
00
00
00
00
00
00
00
00
00
00
00
00
00
00
00
00
00
00
00
00
00
00
00
00
00
00
00
00
00
00
00
00
00
00
00</div>
<div class="col hx" style="left:90.40px;">00
02
02
00
00
00
00
00
00
00
00
00
00
00
00
00
00
00
00
00
00
00
00
00
00
00
00
00
00
00
00
00
00
00
00
00
00
00
00</div>
<div class="col hx" style="left:105.00px;">00
6<i class="l"><b>F</b></i>
70
00
00
00
00
00
00
00
00
00
00
00
00
00
00
00
00
00
00
00
00
00
00
00
00
00
00
00
00
00
00
00
00
00
00
00
00</div>
<div class="col hx" style="left:119.60px;">00
<i class="l"><b>B</b></i>1
00
00
00
00
00
00
00
00
00
00
00
00
00
00
00
00
00
00
00
00
00
00
00
00
00
00
00
00
00
00
00
00
00
00
00
00
00</div>
<div class="col hx" style="left:134.20px;">02
30
00
00
00
00
00
00
00
00
00
00
00
00
00
00
00
00
00
00
00
00
00
00
00
00
00
00
00
00
00
00
00
00
00
00
00
00
00</div>
<div class="col hx" style="left:148.80px;">01
00
02
00
00
00
00
00
00
00
00
00
00
00
00
00
00
00
00
00
00
00
00
00
00
00
00
00
00
00
00
00
00
00
00
00
00
00
00</div>
<div class="col hx" style="left:163.40px;">00
00
48
00
00
00
00
00
00
00
00
00
00
00
00
00
00
00
00
00
00
00
00
00
00
00
00
00
00
00
00
00
00
00
00
00
00
00
00</div>
<div class="col hx" style="left:178.00px;">00
00
68
00
00
00
00
00
00
00
00
00
00
00
00
00
00
00
00
00
00
00
00
00
00
00
00
00
00
00
00
00
00
00
00
00
00
00
00</div>
<div class="col hx" style="left:192.60px;">07
0<i class="l"><b>E</b></i>
20
00
00
00
00
00
00
00
00
00
00
00
00
00
00
00
00
00
00
00
00
00
00
00
00
00
00
00
00
00
00
00
00
00
00
00
00</div>
<div class="col hx" style="left:207.20px;">00
01
00
00
00
00
00
00
00
00
00
00
00
00
00
00
00
00
00
00
00
00
00
00
00
00
00
00
00
00
00
00
00
00
00
00
00
00
00</div>
<div class="col hx" style="left:221.80px;">00
00
00
00
00
00
00
00
00
00
00
00
00
00
00
00
00
00
00
00
00
00
00
00
00
00
00
00
00
00
00
00
00
00
00
00
00
00
00</div>
<div class="col hx" style="left:236.40px;">00
00
00
00
00
00
00
00
00
00
00
00
00
00
00
00
00
00
00
00
00
00
00
00
00
00
00
00
00
00
00
00
00
00
00
00
00
00
00</div>
<div class="col hx" style="left:251.00px;">03
0<i class="l"><b>C</b></i>
0<i class="l"><b>E</b></i>
00
00
00
00
00
00
00
00
00
00
00
00
00
00
00
00
00
00
00
00
00
00
00
00
00
00
00
00
00
00
00
00
00
00
00
00</div>
<div class="hd as" style="left:271.2px;top:48px;"><i>0</i><i>1</i><i>2</i><i>3</i><i>4</i><i>5</i><i>6</i><i>7</i><i>8</i><i>9</i><i><b style="transform:scaleX(0.8)">A</b></i><i><b style="transform:scaleX(0.8)">B</b></i><i><b style="transform:scaleX(0.76)">C</b></i><i><b style="transform:scaleX(0.76)">D</b></i><i><b style="transform:scaleX(0.8)">E</b></i><i><b style="transform:scaleX(0.85)">F</b></i></div>
<div class="col as" style="left:271.2px;"><i><b style="transform:scaleX(0.8)">Ê</b></i><i>þ</i><i>º</i><i><b style="transform:scaleX(0.62)">¾</b></i><i></i><i></i><i></i><i></i><i></i><i></i><i></i><i></i><i></i><i></i><i></i><i></i>
<i></i><i></i><i><b style="transform:scaleX(.56);-webkit-text-stroke:.7px">@</b></i><i></i><i></i><i>o</i><i>±</i><i>0</i><i></i><i></i><i></i><i></i><i></i><i></i><i></i><i></i>
<i></i><i></i><i></i><i></i><i></i><i>p</i><i></i><i></i><i></i><i><b style="transform:scaleX(0.74)">H</b></i><i>h</i><i></i><i></i><i></i><i></i><i></i></div>
<div class="hd" style="left:569.30px;top:48px;width:14.6px;text-align:center">0</div>
<div class="hd" style="left:583.90px;top:48px;width:14.6px;text-align:center">1</div>
<div class="hd" style="left:598.50px;top:48px;width:14.6px;text-align:center">2</div>
<div class="hd" style="left:613.10px;top:48px;width:14.6px;text-align:center">3</div>
<div class="hd" style="left:627.70px;top:48px;width:14.6px;text-align:center">4</div>
<div class="hd" style="left:642.30px;top:48px;width:14.6px;text-align:center">5</div>
<div class="hd" style="left:656.90px;top:48px;width:14.6px;text-align:center">6</div>
<div class="hd" style="left:671.50px;top:48px;width:14.6px;text-align:center">7</div>
<div class="hd" style="left:686.10px;top:48px;width:14.6px;text-align:center">8</div>
<div class="hd" style="left:700.70px;top:48px;width:14.6px;text-align:center">9</div>
<div class="hd" style="left:715.30px;top:48px;width:14.6px;text-align:center">A</div>
<div class="hd" style="left:729.90px;top:48px;width:14.6px;text-align:center">B</div>
<div class="hd" style="left:744.50px;top:48px;width:14.6px;text-align:center">C</div>
<div class="hd" style="left:759.10px;top:48px;width:14.6px;text-align:center">D</div>
<div class="hd" style="left:773.70px;top:48px;width:14.6px;text-align:center">E</div>
<div class="hd" style="left:788.30px;top:48px;width:14.6px;text-align:center">F</div>
<div class="col ad" style="left:539.6px;">0000h
0010h
0020h
0030h
0040h
0050h
0060h
0070h
0080h
0090h
00<i class="l"><b>A</b></i>0h
00<i class="l"><b>B</b></i>0h
00<i class="l"><b>C</b></i>0h
00<i class="l"><b>D</b></i>0h
00<i class="l"><b>E</b></i>0h
00<i class="l"><b>F</b></i>0h
0100h
0110h
0120h
0130h
0140h
0150h
0160h
0170h
0180h
0190h
01<i class="l"><b>A</b></i>0h
01<i class="l"><b>B</b></i>0h
01<i class="l"><b>C</b></i>0h
01<i class="l"><b>D</b></i>0h
01<i class="l"><b>E</b></i>0h
01<i class="l"><b>F</b></i>0h
0200h
0210h
0220h
0230h
0240h
0250h
0260h</div>
<div class="col hx" style="left:570.10px;"><i class="l"><b>C</b></i><i class="l"><b>A</b></i>
00
00
00
00
00
00
00
00
00
00
00
00
00
00
00
00
00
00
00
00
00
00
00
00
00
00
00
00
00
00
00
00
00
00
00
00
00
00</div>
<div class="col hx" style="left:584.70px;"><i class="l"><b>F</b></i><i class="l"><b>E</b></i>
00
00
00
00
00
00
00
00
00
00
00
00
00
00
00
00
00
00
00
00
00
00
00
00
00
00
00
00
00
00
00
00
00
00
00
00
00
00</div>
<div class="col hx" style="left:599.30px;"><i class="l"><b>B</b></i><i class="l"><b>A</b></i>
40
00
00
00
00
00
00
00
00
00
00
00
00
00
00
00
00
00
00
00
00
00
00
00
00
00
00
00
00
00
00
00
00
00
00
00
00
00</div>
<div class="col hx" style="left:613.90px;"><i class="l"><b>B</b></i><i class="l"><b>E</b></i>
00
00
00
00
00
00
00
00
00
00
00
00
00
00
00
00
00
00
00
00
00
00
00
00
00
00
00
00
00
00
00
00
00
00
00
00
00
00</div>
<div class="col hx" style="left:628.50px;">00
02
02
00
00
00
00
00
00
00
00
00
00
00
00
00
00
00
00
00
00
00
00
00
00
00
00
00
00
00
00
00
00
00
00
00
00
00
00</div>
<div class="col hx" style="left:643.10px;">00
6<i class="l"><b>F</b></i>
70
00
00
00
00
00
00
00
00
00
00
00
00
00
00
00
00
00
00
00
00
00
00
00
00
00
00
00
00
00
00
00
00
00
00
00
00</div>
<div class="col hx" style="left:657.70px;">00
<i class="l"><b>B</b></i>1
00
00
00
00
00
00
00
00
00
00
00
00
00
00
00
00
00
00
00
00
00
00
00
00
00
00
00
00
00
00
00
00
00
00
00
00
00</div>
<div class="col hx" style="left:672.30px;">02
30
00
00
00
00
00
00
00
00
00
00
00
00
00
00
00
00
00
00
00
00
00
00
00
00
00
00
00
00
00
00
00
00
00
00
00
00
00</div>
<div class="col hx" style="left:686.90px;">01
00
02
00
00
00
00
00
00
00
00
00
00
00
00
00
00
00
00
00
00
00
00
00
00
00
00
00
00
00
00
00
00
00
00
00
00
00
00</div>
<div class="col hx" style="left:701.50px;">00
00
48
00
00
00
00
00
00
00
00
00
00
00
00
00
00
00
00
00
00
00
00
00
00
00
00
00
00
00
00
00
00
00
00
00
00
00
00</div>
<div class="col hx" style="left:716.10px;">00
00
68
00
00
00
00
00
00
00
00
00
00
00
00
00
00
00
00
00
00
00
00
00
00
00
00
00
00
00
00
00
00
00
00
00
00
00
00</div>
<div class="col hx" style="left:730.70px;">07
0<i class="l"><b>E</b></i>
20
00
00
00
00
00
00
00
00
00
00
00
00
00
00
00
00
00
00
00
00
00
00
00
00
00
00
00
00
00
00
00
00
00
00
00
00</div>
<div class="col hx" style="left:745.30px;">00
01
00
00
00
00
00
00
00
00
00
00
00
00
00
00
00
00
00
00
00
00
00
00
00
00
00
00
00
00
00
00
00
00
00
00
00
00
00</div>
<div class="col hx" style="left:759.90px;">00
00
00
00
00
00
00
00
00
00
00
00
00
00
00
00
00
00
00
00
00
00
00
00
00
00
00
00
00
00
00
00
00
00
00
00
00
00
00</div>
<div class="col hx" style="left:774.50px;">00
00
00
00
00
00
00
00
00
00
00
00
00
00
00
00
00
00
00
00
00
00
00
00
00
00
00
00
00
00
00
00
00
00
00
00
00
00
00</div>
<div class="col hx" style="left:789.10px;">03
0<i class="l"><b>C</b></i>
0<i class="l"><b>E</b></i>
00
00
00
00
00
00
00
00
00
00
00
00
00
00
00
00
00
00
00
00
00
00
00
00
00
00
00
00
00
00
00
00
00
00
00
00</div>
<div class="hd as" style="left:809.3px;top:48px;"><i>0</i><i>1</i><i>2</i><i>3</i><i>4</i><i>5</i><i>6</i><i>7</i><i>8</i><i>9</i><i><b style="transform:scaleX(0.8)">A</b></i><i><b style="transform:scaleX(0.8)">B</b></i><i><b style="transform:scaleX(0.76)">C</b></i><i><b style="transform:scaleX(0.76)">D</b></i><i><b style="transform:scaleX(0.8)">E</b></i><i><b style="transform:scaleX(0.85)">F</b></i></div>
<div class="col as" style="left:809.3px;"><i><b style="transform:scaleX(0.8)">Ê</b></i><i>þ</i><i>º</i><i><b style="transform:scaleX(0.62)">¾</b></i><i></i><i></i><i></i><i></i><i></i><i></i><i></i><i></i><i></i><i></i><i></i><i></i>
<i></i><i></i><i><b style="transform:scaleX(.56);-webkit-text-stroke:.7px">@</b></i><i></i><i></i><i>o</i><i>±</i><i>0</i><i></i><i></i><i></i><i></i><i></i><i></i><i></i><i></i>
<i></i><i></i><i></i><i></i><i></i><i>p</i><i></i><i></i><i></i><i><b style="transform:scaleX(0.74)">H</b></i><i>h</i><i></i><i></i><i></i><i></i><i></i></div>
<div class="t" style="left:371.4px;top:16.90px;font-size:7.1px;color:#76859c;line-height:12px;font-family:Liberation Mono,monospace;letter-spacing:0px;">Hex</div>
<div class="t" style="left:571.7px;top:17.30px;font-size:6.6px;color:#98a2b2;line-height:12px;letter-spacing:0.010px;">mov</div>
<div class="t" style="left:596.4px;top:13.40px;font-size:5px;color:#9fb0c6;line-height:12px;">%</div>
<div class="t" style="left:589px;top:21.40px;font-size:4.5px;color:#8a96a8;line-height:12px;">%</div>
<div class="t" style="left:10.5px;top:34.00px;font-size:8.2px;color:#c9c7c3;font-weight:bold;line-height:12px;letter-spacing:-0.086px;">Startup</div>
<div class="t" style="left:72px;top:34.50px;font-size:7.9px;color:#151515;font-weight:bold;line-height:12px;letter-spacing:-0.096px;">libbinaryninjacore.1.dylib.bak</div>
<div class="t" style="left:547.5px;top:34.50px;font-size:7.9px;color:#151515;font-weight:bold;line-height:12px;letter-spacing:0.232px;">libbinaryninjacore.1.dylib</div>
<div class="t" style="left:445px;top:1.00px;font-size:8.6px;color:#b7b5b2;line-height:12px;letter-spacing:-0.042px;">/Applications/Binary Ninja.app/Contents/MacOS/libbinaryninjacore.1.dylib - 010 Editor</div>
<div class="t" style="left:1115px;top:34.00px;font-size:8.9px;color:#d9d7d3;line-height:12px;letter-spacing:0.016px;">Workspace</div>
<div class="t" style="left:1098.68px;top:48.40px;font-size:8.5px;color:#dcdad6;font-weight:bold;line-height:12px;">File</div>
<div class="t" style="left:1154.79px;top:48.40px;font-size:8.5px;color:#dcdad6;font-weight:bold;line-height:12px;">Path</div>
<div class="t" style="left:1091.5px;top:61.30px;font-size:8.4px;color:#e3e1dd;font-weight:bold;line-height:12px;letter-spacing:-0.134px;">Open Files</div>
<div class="t" style="left:1097.8px;top:71.28px;font-size:8.4px;color:#dddbd7;line-height:12px;letter-spacing:-0.035px;">libb...ylib</div>
<div class="t" style="left:1137.7px;top:71.28px;font-size:8.4px;color:#8d8a86;line-height:12px;letter-spacing:-0.099px;">/Appl...acOS/</div>
<div class="t" style="left:1097.8px;top:81.27px;font-size:8.4px;color:#dddbd7;line-height:12px;letter-spacing:-0.023px;">libb....bak</div>
<div class="t" style="left:1137.7px;top:81.27px;font-size:8.4px;color:#8d8a86;line-height:12px;letter-spacing:-0.099px;">/Appl...acOS/</div>
<div class="t" style="left:1091.5px;top:91.25px;font-size:8.4px;color:#e3e1dd;font-weight:bold;line-height:12px;letter-spacing:-0.011px;">Project</div>
<div class="t" style="left:1091.5px;top:101.24px;font-size:8.4px;color:#e3e1dd;font-weight:bold;line-height:12px;letter-spacing:-0.118px;">Favorite Files</div>
<div class="t" style="left:1091.5px;top:111.22px;font-size:8.4px;color:#e3e1dd;font-weight:bold;line-height:12px;letter-spacing:-0.074px;">Recent Files</div>
<div class="t" style="left:1097.8px;top:121.21px;font-size:8.4px;color:#dddbd7;line-height:12px;letter-spacing:-0.035px;">libb...ylib</div>
<div class="t" style="left:1137.7px;top:121.21px;font-size:8.4px;color:#8d8a86;line-height:12px;letter-spacing:-0.005px;">/Users...tures/</div>
<div class="t" style="left:1097.8px;top:131.19px;font-size:8.4px;color:#dddbd7;line-height:12px;letter-spacing:0.011px;">temp3</div>
<div class="t" style="left:1137.7px;top:131.19px;font-size:8.4px;color:#8d8a86;line-height:12px;letter-spacing:-0.005px;">/Users...tures/</div>
<div class="t" style="left:1097.8px;top:141.18px;font-size:8.4px;color:#dddbd7;line-height:12px;letter-spacing:-0.115px;">010...png</div>
<div class="t" style="left:1137.7px;top:141.18px;font-size:8.4px;color:#8d8a86;line-height:12px;letter-spacing:-0.005px;">/Users...tures/</div>
<div class="t" style="left:1097.8px;top:151.16px;font-size:8.4px;color:#dddbd7;line-height:12px;letter-spacing:0.009px;">ida64</div>
<div class="t" style="left:1137.7px;top:151.16px;font-size:8.4px;color:#8d8a86;line-height:12px;letter-spacing:-0.099px;">/Appl...acOS/</div>
<div class="t" style="left:1097.8px;top:161.15px;font-size:8.4px;color:#dddbd7;line-height:12px;letter-spacing:-0.270px;">ida</div>
<div class="t" style="left:1137.7px;top:161.15px;font-size:8.4px;color:#8d8a86;line-height:12px;letter-spacing:-0.079px;">/Users...o 7.0/</div>
<div class="t" style="left:1097.8px;top:171.13px;font-size:8.4px;color:#dddbd7;line-height:12px;letter-spacing:0.009px;">ida64</div>
<div class="t" style="left:1137.7px;top:171.13px;font-size:8.4px;color:#8d8a86;line-height:12px;letter-spacing:-0.079px;">/Users...o 7.0/</div>
<div class="t" style="left:1097.8px;top:181.12px;font-size:8.4px;color:#dddbd7;line-height:12px;letter-spacing:-0.043px;">libi...ylib</div>
<div class="t" style="left:1137.7px;top:181.12px;font-size:8.4px;color:#8d8a86;line-height:12px;letter-spacing:-0.079px;">/Users...o 7.0/</div>
<div class="t" style="left:1097.8px;top:191.11px;font-size:8.4px;color:#dddbd7;line-height:12px;letter-spacing:-0.043px;">libi...ylib</div>
<div class="t" style="left:1137.7px;top:191.11px;font-size:8.4px;color:#8d8a86;line-height:12px;letter-spacing:-0.079px;">/Users...o 7.0/</div>
<div class="t" style="left:1097.8px;top:201.09px;font-size:8.4px;color:#dddbd7;line-height:12px;letter-spacing:-0.163px;">ida_....pyc</div>
<div class="t" style="left:1137.7px;top:201.09px;font-size:8.4px;color:#8d8a86;line-height:12px;letter-spacing:-0.007px;">/User...thon/</div>
<div class="t" style="left:1097.8px;top:211.07px;font-size:8.4px;color:#dddbd7;line-height:12px;letter-spacing:-0.163px;">ida_....pyc</div>
<div class="t" style="left:1137.7px;top:211.07px;font-size:8.4px;color:#8d8a86;line-height:12px;letter-spacing:0.029px;">/User...ktop/</div>
<div class="t" style="left:1097.8px;top:221.06px;font-size:8.4px;color:#dddbd7;line-height:12px;letter-spacing:-0.043px;">libi...ylib</div>
<div class="t" style="left:1137.7px;top:221.06px;font-size:8.4px;color:#8d8a86;line-height:12px;letter-spacing:-0.099px;">/Appl...acOS/</div>
<div class="t" style="left:1097.8px;top:231.05px;font-size:8.4px;color:#dddbd7;line-height:12px;letter-spacing:-0.043px;">libi...ylib</div>
<div class="t" style="left:1137.7px;top:231.05px;font-size:8.4px;color:#8d8a86;line-height:12px;letter-spacing:0.023px;">/Volu...atch/</div>
<div class="t" style="left:1102.8px;top:243.30px;font-size:8.1px;color:#111;font-weight:bold;line-height:12px;letter-spacing:-0.186px;">Workspace</div>
<div class="t" style="left:1118.2px;top:258.00px;font-size:8.9px;color:#d9d7d3;line-height:12px;letter-spacing:0.132px;">Inspector</div>
<div class="t" style="left:1102.6px;top:272.20px;font-size:8.5px;color:#dcdad6;font-weight:bold;line-height:12px;">Type</div>
<div class="t" style="left:1158.7px;top:272.20px;font-size:8.5px;color:#dcdad6;font-weight:bold;line-height:12px;">Value</div>
<div class="t" style="left:1076.4px;top:284.30px;font-size:8.6px;color:#dddbd7;line-height:12px;letter-spacing:-0.263px;">Binary</div>
<div class="t" style="left:1151.6px;top:284.30px;font-size:8.6px;color:#dddbd7;line-height:12px;letter-spacing:-0.366px;">11001010</div>
<div class="t" style="left:1076.4px;top:296.83px;font-size:8.6px;color:#dddbd7;line-height:12px;letter-spacing:-0.125px;">Signed Byte</div>
<div class="t" style="left:1151.6px;top:296.83px;font-size:8.6px;color:#dddbd7;line-height:12px;">-54</div>
<div class="t" style="left:1076.4px;top:309.36px;font-size:8.6px;color:#dddbd7;line-height:12px;letter-spacing:-0.118px;">Unsigned Byte</div>
<div class="t" style="left:1151.6px;top:309.36px;font-size:8.6px;color:#dddbd7;line-height:12px;letter-spacing:-0.216px;">202</div>
<div class="t" style="left:1076.4px;top:321.89px;font-size:8.6px;color:#dddbd7;line-height:12px;letter-spacing:-0.085px;">Signed Short</div>
<div class="t" style="left:1151.6px;top:321.89px;font-size:8.6px;color:#dddbd7;line-height:12px;">-310</div>
<div class="t" style="left:1076.4px;top:334.42px;font-size:8.6px;color:#dddbd7;line-height:12px;letter-spacing:-0.070px;">Unsigned Short</div>
<div class="t" style="left:1151.6px;top:334.42px;font-size:8.6px;color:#dddbd7;line-height:12px;letter-spacing:0.037px;">65226</div>
<div class="t" style="left:1076.4px;top:346.95px;font-size:8.6px;color:#dddbd7;line-height:12px;">Signed Int</div>
<div class="t" style="left:1151.6px;top:346.95px;font-size:8.6px;color:#dddbd7;line-height:12px;letter-spacing:0.217px;">-10950...</div>
<div class="t" style="left:1076.4px;top:359.48px;font-size:8.6px;color:#dddbd7;line-height:12px;">Unsigned Int</div>
<div class="t" style="left:1151.6px;top:359.48px;font-size:8.6px;color:#dddbd7;line-height:12px;letter-spacing:0.004px;">319992...</div>
<div class="t" style="left:1076.4px;top:372.01px;font-size:8.6px;color:#dddbd7;line-height:12px;">Signed Int64</div>
<div class="t" style="left:1151.6px;top:372.01px;font-size:8.6px;color:#dddbd7;line-height:12px;letter-spacing:-0.381px;">1441151...</div>
<div class="t" style="left:1076.4px;top:384.54px;font-size:8.6px;color:#dddbd7;line-height:12px;letter-spacing:-0.032px;">Unsigned Int64</div>
<div class="t" style="left:1151.6px;top:384.54px;font-size:8.6px;color:#dddbd7;line-height:12px;letter-spacing:-0.381px;">1441151...</div>
<div class="t" style="left:1076.4px;top:397.07px;font-size:8.6px;color:#dddbd7;line-height:12px;">Float</div>
<div class="t" style="left:1151.6px;top:397.07px;font-size:8.6px;color:#dddbd7;line-height:12px;letter-spacing:-0.044px;">-0.3652...</div>
<div class="t" style="left:1102.27px;top:411.40px;font-size:8.1px;color:#111;font-weight:bold;line-height:12px;">Inspector</div>
<div class="t" style="left:581.61px;top:426.00px;font-size:8.7px;color:#d9d7d3;line-height:12px;">Compare</div>
<div class="t" style="left:246px;top:440.80px;font-size:8.4px;color:#d9d7d3;line-height:12px;letter-spacing:0.051px;">/Applications/Binary Ninja.app/Contents/MacOS/libbinaryninjacore.1.dylib.bak</div>
<div class="t" style="left:657.8px;top:440.80px;font-size:8.4px;color:#d9d7d3;line-height:12px;letter-spacing:-0.011px;">vs.</div>
<div class="t" style="left:797px;top:440.80px;font-size:8.4px;color:#d9d7d3;line-height:12px;letter-spacing:0.053px;">/Applications/Binary Ninja.app/Contents/MacOS/libbinaryninjacore.1.dylib</div>
<div class="t" style="left:84.91px;top:455.00px;font-size:8.5px;color:#dcdad6;font-weight:bold;line-height:12px;">Result</div>
<div class="t" style="left:135.4px;top:455.00px;font-size:8.5px;color:#dcdad6;font-weight:bold;line-height:12px;">Address A</div>
<div class="t" style="left:210.1px;top:455.00px;font-size:8.5px;color:#dcdad6;font-weight:bold;line-height:12px;">Size A</div>
<div class="t" style="left:264.04px;top:455.00px;font-size:8.5px;color:#dcdad6;font-weight:bold;line-height:12px;">Address B</div>
<div class="t" style="left:334.75px;top:455.00px;font-size:8.5px;color:#dcdad6;font-weight:bold;line-height:12px;">Size B</div>
<div class="t" style="left:82px;top:468.00px;font-size:8.6px;color:#f0f4f8;line-height:12px;letter-spacing:-0.044px;">Match</div>
<div class="t" style="left:132.70000000000002px;top:468.00px;font-size:8.6px;color:#f0f4f8;line-height:12px;letter-spacing:-0.133px;">0h</div>
<div class="t" style="left:195.1px;top:468.00px;font-size:8.6px;color:#f0f4f8;line-height:12px;letter-spacing:-0.290px;">137B961h</div>
<div class="t" style="left:258.09999999999997px;top:468.00px;font-size:8.6px;color:#f0f4f8;line-height:12px;letter-spacing:-0.133px;">0h</div>
<div class="t" style="left:320.29999999999995px;top:468.00px;font-size:8.6px;color:#f0f4f8;line-height:12px;letter-spacing:-0.290px;">137B961h</div>
<div class="t" style="left:82px;top:480.50px;font-size:8.6px;color:#dddbd7;line-height:12px;letter-spacing:-0.014px;">Difference</div>
<div class="t" style="left:132.70000000000002px;top:480.50px;font-size:8.6px;color:#dddbd7;line-height:12px;letter-spacing:-0.290px;">137B961h</div>
<div class="t" style="left:195.1px;top:480.50px;font-size:8.6px;color:#dddbd7;line-height:12px;letter-spacing:-0.233px;">100h</div>
<div class="t" style="left:258.09999999999997px;top:480.50px;font-size:8.6px;color:#dddbd7;line-height:12px;letter-spacing:-0.290px;">137B961h</div>
<div class="t" style="left:320.29999999999995px;top:480.50px;font-size:8.6px;color:#dddbd7;line-height:12px;letter-spacing:-0.233px;">100h</div>
<div class="t" style="left:82px;top:493.00px;font-size:8.6px;color:#dddbd7;line-height:12px;letter-spacing:-0.044px;">Match</div>
<div class="t" style="left:132.70000000000002px;top:493.00px;font-size:8.6px;color:#dddbd7;line-height:12px;letter-spacing:-0.346px;">137BA61h</div>
<div class="t" style="left:195.1px;top:493.00px;font-size:8.6px;color:#dddbd7;line-height:12px;letter-spacing:-0.045px;">2495DF0h</div>
<div class="t" style="left:258.09999999999997px;top:493.00px;font-size:8.6px;color:#dddbd7;line-height:12px;letter-spacing:-0.346px;">137BA61h</div>
<div class="t" style="left:320.29999999999995px;top:493.00px;font-size:8.6px;color:#dddbd7;line-height:12px;letter-spacing:-0.045px;">2495DF0h</div>
<div class="t" style="left:82px;top:505.50px;font-size:8.6px;color:#dddbd7;line-height:12px;letter-spacing:-0.014px;">Difference</div>
<div class="t" style="left:132.70000000000002px;top:505.50px;font-size:8.6px;color:#dddbd7;line-height:12px;letter-spacing:-0.203px;">3811851h</div>
<div class="t" style="left:195.1px;top:505.50px;font-size:8.6px;color:#dddbd7;line-height:12px;letter-spacing:-0.233px;">100h</div>
<div class="t" style="left:258.09999999999997px;top:505.50px;font-size:8.6px;color:#dddbd7;line-height:12px;letter-spacing:-0.203px;">3811851h</div>
<div class="t" style="left:320.29999999999995px;top:505.50px;font-size:8.6px;color:#dddbd7;line-height:12px;letter-spacing:-0.233px;">100h</div>
<div class="t" style="left:82px;top:518.00px;font-size:8.6px;color:#dddbd7;line-height:12px;letter-spacing:-0.044px;">Match</div>
<div class="t" style="left:132.70000000000002px;top:518.00px;font-size:8.6px;color:#dddbd7;line-height:12px;letter-spacing:-0.203px;">3811951h</div>
<div class="t" style="left:195.1px;top:518.00px;font-size:8.6px;color:#dddbd7;line-height:12px;letter-spacing:-0.465px;">1374ECFh</div>
<div class="t" style="left:258.09999999999997px;top:518.00px;font-size:8.6px;color:#dddbd7;line-height:12px;letter-spacing:-0.203px;">3811951h</div>
<div class="t" style="left:320.29999999999995px;top:518.00px;font-size:8.6px;color:#dddbd7;line-height:12px;letter-spacing:-0.465px;">1374ECFh</div>
<div class="t" style="left:0.5px;top:569.30px;font-size:8.6px;color:#e0deda;line-height:12px;">5</div>
<div class="t" style="left:27.7px;top:580.90px;font-size:8.5px;color:#d4d2ce;line-height:12px;letter-spacing:0.014px;">Output</div>
<div class="t" style="left:96.7px;top:580.90px;font-size:8.5px;color:#d4d2ce;line-height:12px;letter-spacing:-0.103px;">Find Results</div>
<div class="t" style="left:185.3px;top:580.90px;font-size:8.5px;color:#d4d2ce;line-height:12px;letter-spacing:-0.086px;">Find in Files</div>
<div class="t" style="left:273.3px;top:580.90px;font-size:8.5px;color:#0c0c0c;line-height:12px;-webkit-text-stroke:.45px;letter-spacing:-0.180px;">Compare</div>
<div class="t" style="left:350px;top:580.90px;font-size:8.5px;color:#d4d2ce;line-height:12px;letter-spacing:0.030px;">Histogram</div>
<div class="t" style="left:431.7px;top:580.90px;font-size:8.5px;color:#d4d2ce;line-height:12px;letter-spacing:-0.019px;">Checksum</div>
<div class="t" style="left:514.3px;top:580.90px;font-size:8.5px;color:#d4d2ce;line-height:12px;letter-spacing:-0.101px;">Process</div>
<div class="t" style="left:587.3px;top:580.90px;font-size:8.5px;color:#d4d2ce;line-height:12px;letter-spacing:-0.041px;">Disassembler</div>
<div class="t" style="left:3px;top:596.30px;font-size:8.5px;color:#cfcdc9;line-height:12px;letter-spacing:0.045px;">Selected: 20429153 [137B961h] bytes (Range: 0 [0h] to 20429152 [137B960h])</div>
<div class="t" style="left:861.7px;top:596.30px;font-size:8.5px;color:#cfcdc9;line-height:12px;letter-spacing:0.128px;">Start: 0 [0h]</div>
<div class="t" style="left:913.3px;top:596.30px;font-size:8.5px;color:#cfcdc9;line-height:12px;letter-spacing:-0.028px;">Sel: 20429153 [137B961h]</div>
<div class="t" style="left:1019.3px;top:596.30px;font-size:8.5px;color:#cfcdc9;line-height:12px;letter-spacing:-0.150px;">Size: 79,194,144</div>
<div class="t" style="left:1098.3px;top:596.30px;font-size:8.5px;color:#cfcdc9;line-height:12px;letter-spacing:-0.239px;">Hex</div>
<div class="t" style="left:1118.3px;top:596.30px;font-size:8.5px;color:#cfcdc9;line-height:12px;letter-spacing:-0.360px;">ANSI</div>
<div class="t" style="left:1142.7px;top:596.30px;font-size:8.5px;color:#cfcdc9;line-height:12px;letter-spacing:-0.327px;">LIT</div>
<div class="t" style="left:1184.3px;top:596.30px;font-size:8.5px;color:#cfcdc9;line-height:12px;letter-spacing:-0.390px;">INS</div>
<div class="t" style="left:250.8px;top:580.80px;font-size:10.5px;color:#f5da4e;font-weight:bold;line-height:12px;">?</div>
<div class="t" style="left:410.8px;top:581.00px;font-size:10px;color:#e2ecfa;font-weight:bold;line-height:12px;-webkit-text-stroke:.5px #4f86cc;">&#931;</div>
<div class="t" style="left:565.6px;top:581.20px;font-size:6px;color:#aeb6c4;line-height:12px;">ov</div>
</div></div></body></html>
